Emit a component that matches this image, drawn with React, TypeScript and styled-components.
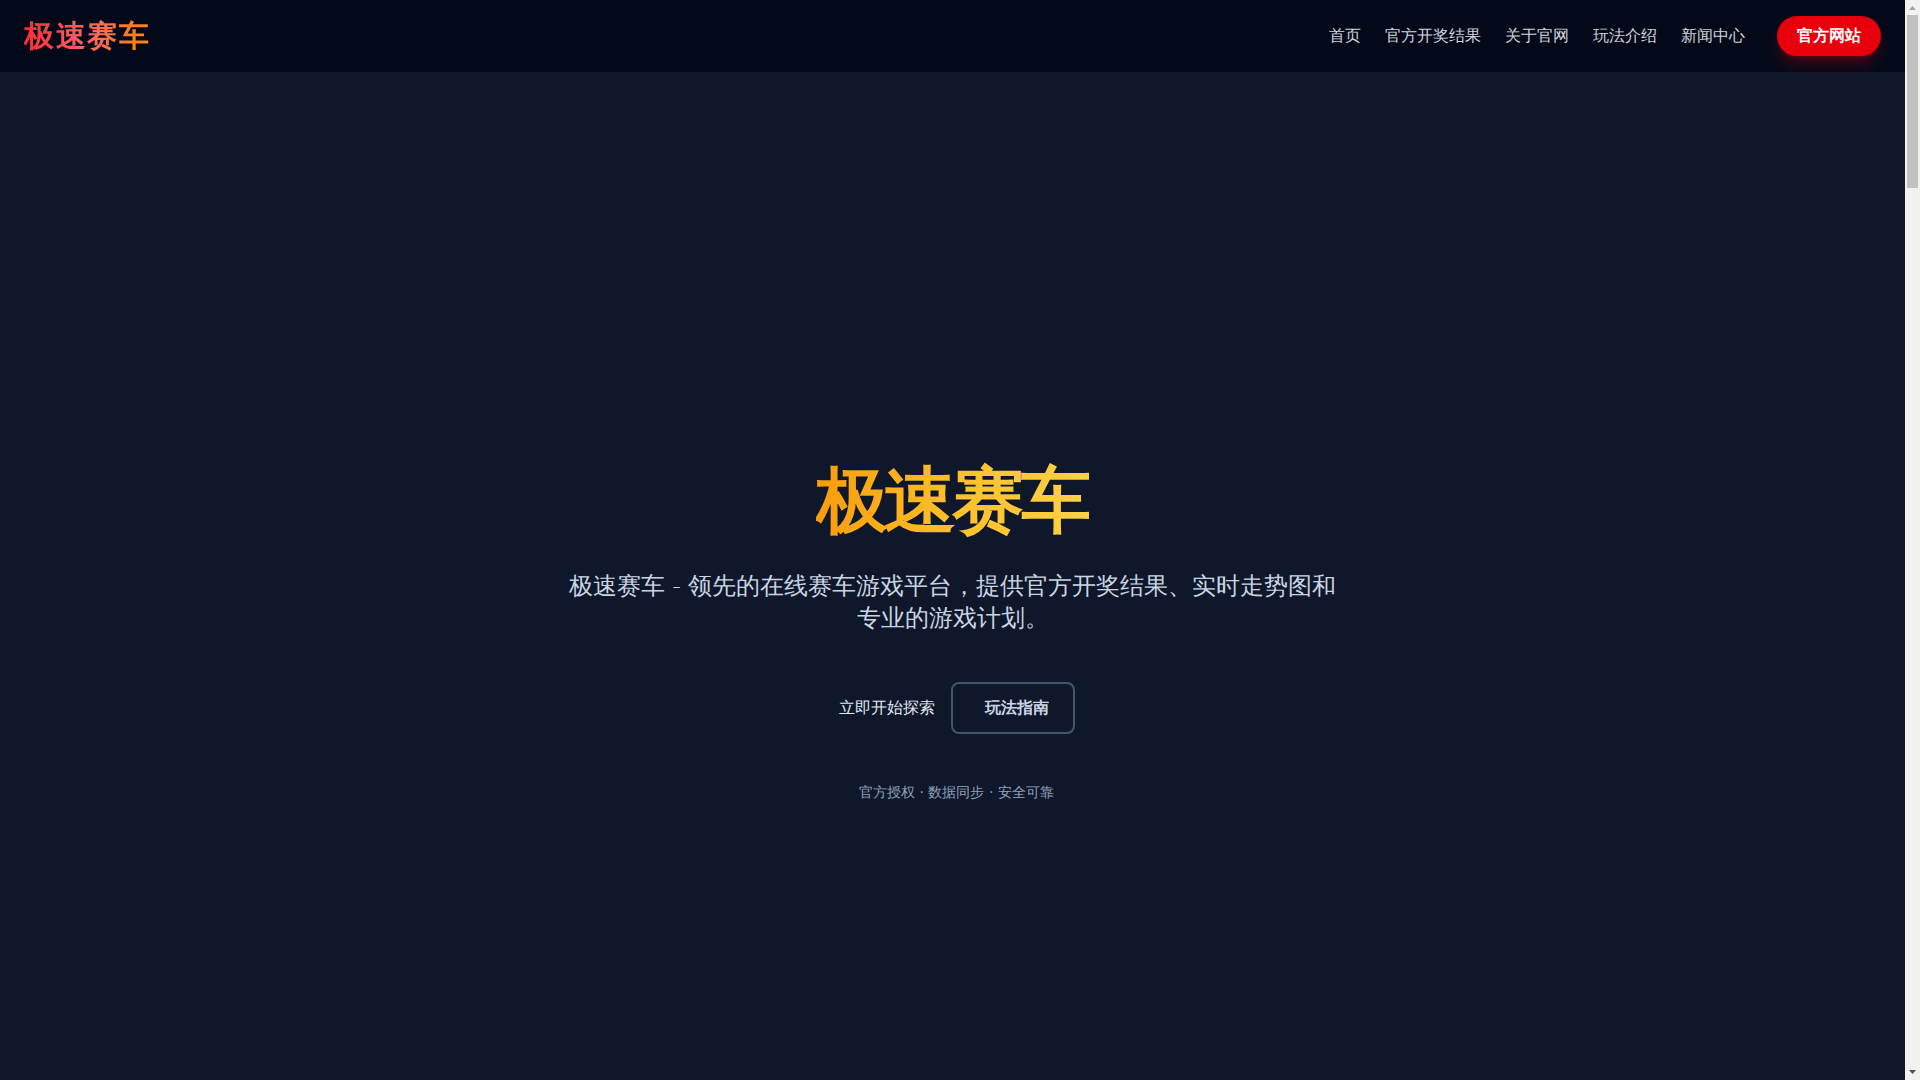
import React from 'react';
import styled, { createGlobalStyle } from 'styled-components';

const GlobalStyle = createGlobalStyle`
  *, *::before, *::after { box-sizing: border-box; }
  body {
    margin: 0;
    background: #0f172b;
    color: #e2e8f0;
    font-family: "DejaVu Sans", sans-serif;
    font-size: 16px;
    line-height: 24px;
  }
  h1, p { margin: 0; }
  a { color: inherit; text-decoration: none; }
`;

const Viewport = styled.div`
  display: flex;
  height: 100vh;
  overflow: hidden;
`;

const Page = styled.div`
  flex: 1;
  min-width: 0;
  display: flex;
  flex-direction: column;
`;

const Header = styled.header`
  display: flex;
  align-items: center;
  justify-content: space-between;
  padding: 16px 24px;
  background: #04091a;
`;

const Logo = styled.a`
  font-size: 30px;
  line-height: 36px;
  font-weight: 700;
  letter-spacing: 0.05em;
  color: transparent;
  background: linear-gradient(to right, #fb2c36, #ff6467, #ff8904);
  background-clip: text;
  -webkit-background-clip: text;
`;

const Nav = styled.nav`
  display: flex;
  align-items: center;
  gap: 24px;
  color: #d1d5dc;
`;

const SiteLink = styled.a`
  margin-left: 8px;
  padding: 8px 20px;
  border-radius: 20px;
  background: #e7000b;
  color: #fff;
  font-weight: 700;
  box-shadow: 0 10px 15px -3px rgba(231, 0, 11, 0.3), 0 4px 6px -4px rgba(231, 0, 11, 0.3);
`;

const Hero = styled.main`
  flex: 1;
  display: flex;
  flex-direction: column;
  align-items: center;
  justify-content: center;
  padding: 114px 24px 0;
  text-align: center;
`;

const Title = styled.h1`
  margin-bottom: 34px;
  font-size: 72px;
  line-height: 72px;
  font-weight: 800;
  letter-spacing: -0.05em;
`;

const GoldText = styled.span`
  color: transparent;
  background: linear-gradient(to right, #f99c0c, #fdc02a, #fdd147);
  background-clip: text;
  -webkit-background-clip: text;
`;

const Summary = styled.p`
  max-width: 768px;
  margin-bottom: 48px;
  font-size: 24px;
  line-height: 32px;
  font-weight: 300;
  color: #cad5e2;
`;

const Actions = styled.div`
  display: flex;
  align-items: center;
  gap: 16px;
  margin-bottom: 48px;
`;

const Label = styled.span`
  margin-left: 8px;
`;

const GuideLink = styled.a`
  padding: 12px 24px;
  border: 2px solid #45556c;
  border-radius: 8px;
  color: #cad5e2;
  font-weight: 600;
`;

const Note = styled.p`
  font-size: 14px;
  line-height: 20px;
  color: #90a1b9;
`;

const Scrollbar = styled.div`
  width: 15px;
  display: flex;
  flex-direction: column;
  align-items: center;
  justify-content: space-between;
  background: #f1f1f1;
`;

const Thumb = styled.div`
  width: 11px;
  height: 16%;
  margin-bottom: auto;
  background: #c1c1c1;
`;

const Arrow = styled.svg`
  display: block;
  width: 15px;
  height: 15px;
`;

const links = ['首页', '官方开奖结果', '关于官网', '玩法介绍', '新闻中心'];

export default function App() {
  return (
    <>
      <GlobalStyle />
      <Viewport>
        <Page>
          <Header>
            <Logo href="#">极速赛车</Logo>
            <Nav>
              {links.map((text) => (
                <a key={text} href="#">{text}</a>
              ))}
              <SiteLink href="#">官方网站</SiteLink>
            </Nav>
          </Header>
          <Hero>
            <Title><GoldText>极速赛车</GoldText></Title>
            <Summary>
              极速赛车 - 领先的在线赛车游戏平台，提供官方开奖结果、实时走势图和专业的游戏计划。
            </Summary>
            <Actions>
              <a href="#"><Label>立即开始探索</Label></a>
              <GuideLink href="#"><Label>玩法指南</Label></GuideLink>
            </Actions>
            <Note><Label>官方授权 · 数据同步 · 安全可靠</Label></Note>
          </Hero>
        </Page>
        <Scrollbar aria-hidden="true">
          <Arrow viewBox="0 0 15 15"><path d="M4 10 L7.5 6 L11 10 Z" fill="#a3a3a3" /></Arrow>
          <Thumb />
          <Arrow viewBox="0 0 15 15"><path d="M4 5 L7.5 9 L11 5 Z" fill="#505050" /></Arrow>
        </Scrollbar>
      </Viewport>
    </>
  );
}
